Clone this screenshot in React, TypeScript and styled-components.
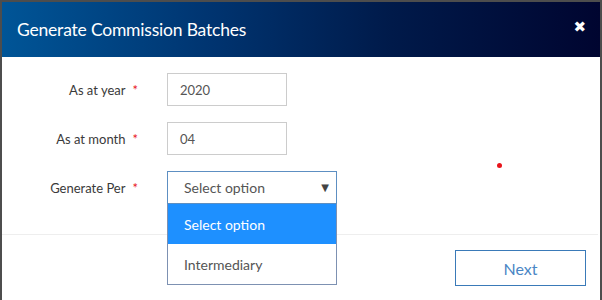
import React from 'react';
import styled, { createGlobalStyle } from 'styled-components';

const GlobalStyle = createGlobalStyle`
  html, body {
    margin: 0;
    padding: 0;
    background: #4d4d4d;
    font-family: Lato, "Liberation Sans", sans-serif;
  }
`;

const Page = styled.div`
  width: 602px;
  height: 300px;
  padding: 2px 2px 0 2px;
  box-sizing: border-box;
  overflow: hidden;
`;

const Modal = styled.div`
  background: #fff;
  height: 298px;
  display: flex;
  flex-direction: column;
`;

const Header = styled.div`
  height: 55px;
  display: flex;
  align-items: center;
  justify-content: space-between;
  padding: 0 14px 0 15px;
  background: linear-gradient(90deg, #005597 0%, #003470 35%, #001a4a 65%, #000530 100%);
  color: #fff;
`;

const Title = styled.h4`
  margin: 0;
  font-size: 17.5px;
  font-weight: 400;
  letter-spacing: -0.2px;
`;

const Close = styled.span`
  font-family: "DejaVu Sans", sans-serif;
  font-size: 15px;
  font-weight: 700;
  margin-top: -6px;
`;

const Body = styled.div`
  padding: 16px 0 30px 0;
  display: flex;
  flex-direction: column;
  gap: 16px;
  position: relative;
`;

const Row = styled.div`
  display: grid;
  grid-template-columns: 136px 1fr;
  column-gap: 29px;
  align-items: center;
`;

const Label = styled.label`
  text-align: right;
  font-size: 13px;
  color: #3a3a3a;
`;

const Star = styled.span`
  color: #e8141b;
  margin-left: 7px;
  font-size: 13px;
`;

const Input = styled.div<{ $w: number }>`
  width: ${({ $w }) => $w}px;
  height: 33px;
  box-sizing: border-box;
  border: 1px solid #cccccc;
  display: flex;
  align-items: center;
  padding-left: 12px;
  font-size: 13px;
  color: #555;
`;

const SelectWrap = styled.div`
  position: relative;
  width: 170px;
`;

const Select = styled.div`
  height: 33px;
  box-sizing: border-box;
  border: 1px solid #5d8fc2;
  display: flex;
  align-items: center;
  justify-content: space-between;
  padding: 0 7px 0 16px;
  font-size: 14px;
  color: #555;
`;

const Arrow = styled.span`
  font-family: "DejaVu Sans", sans-serif;
  font-size: 10px;
  color: #444;
`;

const Options = styled.ul`
  position: absolute;
  top: 33px;
  left: 0;
  width: 170px;
  box-sizing: border-box;
  margin: 0;
  padding: 0;
  list-style: none;
  background: #fff;
  border: 1px solid #7d91b2;
  border-top: none;
  z-index: 2;
`;

const Option = styled.li<{ $active?: boolean }>`
  height: 40px;
  display: flex;
  align-items: center;
  padding-left: 16px;
  font-size: 14px;
  background: ${({ $active }) => ($active ? '#1e90ff' : '#fff')};
  color: ${({ $active }) => ($active ? '#fff' : '#555')};
`;

const Dot = styled.span`
  position: absolute;
  left: 495px;
  top: 106px;
  width: 5px;
  height: 5px;
  border-radius: 50%;
  background: #e8141b;
`;

const Footer = styled.div`
  border-top: 1px solid #eeeeee;
  margin-right: 2px;
  padding: 15px 12px 0 0;
  display: flex;
  justify-content: flex-end;
`;

const NextButton = styled.button`
  width: 131px;
  height: 36px;
  background: #fff;
  border: 1px solid #3a7ab8;
  color: #4a86c5;
  font-family: Lato, "Liberation Sans", sans-serif;
  font-size: 16px;
`;

export default function App() {
  return (
    <Page>
      <GlobalStyle />
      <Modal>
        <Header>
          <Title>Generate Commission Batches</Title>
          <Close>✖</Close>
        </Header>
        <Body>
          <Row>
            <Label>As at year<Star>*</Star></Label>
            <Input $w={120}>2020</Input>
          </Row>
          <Row>
            <Label>As at month<Star>*</Star></Label>
            <Input $w={120}>04</Input>
          </Row>
          <Row>
            <Label>Generate Per<Star>*</Star></Label>
            <SelectWrap>
              <Select>
                <span>Select option</span>
                <Arrow>▼</Arrow>
              </Select>
              <Options>
                <Option $active>Select option</Option>
                <Option>Intermediary</Option>
              </Options>
            </SelectWrap>
          </Row>
          <Dot />
        </Body>
        <Footer>
          <NextButton>Next</NextButton>
        </Footer>
      </Modal>
    </Page>
  );
}
